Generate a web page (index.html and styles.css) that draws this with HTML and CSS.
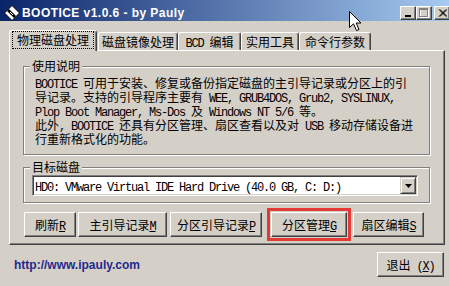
FILE: index.html
```html
<!DOCTYPE html>
<html lang="zh-CN">
<head>
  <meta charset="UTF-8">
  <meta name="viewport" content="width=device-width, initial-scale=1.0">
  <title>BOOTICE v1.0.6 - by Pauly</title>
  <link rel="stylesheet" href="styles.css">
</head>
<body>

<div class="window">
  <div class="titlebar">
    <svg class="app-icon" width="16" height="16" viewBox="0 0 16 16">
      <polygon points="8,0.5 15.5,8 8,15.5 0.5,8" fill="#fff" stroke="#000"/>
      <polygon points="5,4 12,11 10,13 3,6" fill="#000"/>
      <line x1="6" y1="7" x2="9" y2="10" stroke="#fff"/>
      <line x1="7.5" y1="5.5" x2="10.5" y2="8.5" stroke="#fff"/>
    </svg>
    <span class="title">BOOTICE v1.0.6 - by Pauly</span>
    <div class="caption-buttons">
      <button class="cap-btn">
        <svg width="8" height="7" viewBox="0 0 8 7"><rect x="1" y="5" width="6" height="2" fill="#000"/></svg>
      </button>
      <button class="cap-btn">
        <svg width="10" height="10" viewBox="0 0 10 10">
          <rect x="1.5" y="1.5" width="8" height="8" fill="none" stroke="#fff"/>
          <rect x="0.5" y="0.5" width="8" height="8" fill="none" stroke="#808080"/>
          <line x1="0" y1="1.5" x2="9" y2="1.5" stroke="#808080"/>
        </svg>
      </button>
      <button class="cap-btn close">
        <svg width="9" height="8" viewBox="0 0 9 8">
          <path d="M1 0.5 L8 7.5 M8 0.5 L1 7.5 M2 0.5 L9 7.5 M9 0.5 L2 7.5" stroke="#000" stroke-width="1"/>
        </svg>
      </button>
    </div>
  </div>

  <div class="tabs">
    <div class="tab tab-disk active"><span class="focus">物理磁盘处理</span></div>
    <div class="tab tab-image">磁盘镜像处理</div>
    <div class="tab tab-bcd"><span class="en">BCD </span>编辑</div>
    <div class="tab tab-tools">实用工具</div>
    <div class="tab tab-cmd">命令行参数</div>
  </div>

  <div class="panel">
    <fieldset class="group usage">
      <legend>使用说明</legend>
      <p class="desc">
        <span class="en">BOOTICE </span>可用于安装、修复或备份指定磁盘的主引导记录或分区上的引<br>
        导记录。支持的引导程序主要有<span class="en"> WEE, GRUB4DOS, Grub2, SYSLINUX,</span><br>
        <span class="en">Plop Boot Manager, Ms-Dos </span>及<span class="en"> Windows NT 5/6 </span>等。<br>
        此外<span class="en">, BOOTICE </span>还具有分区管理、扇区查看以及对<span class="en"> USB </span>移动存储设备进<br>
        行重新格式化的功能。
      </p>
    </fieldset>

    <fieldset class="group disk">
      <legend>目标磁盘</legend>
      <div class="combo">
        <div class="combo-text"><span class="en">HD0: VMware Virtual IDE Hard Drive (40.0 GB, C: D:)</span></div>
        <span class="combo-arrow">
          <svg width="7" height="4" viewBox="0 0 7 4"><polygon points="0,0 7,0 3.5,4" fill="#000"/></svg>
        </span>
      </div>
    </fieldset>

    <div class="actions">
      <button class="btn btn-refresh">刷新<u class="en">R</u></button>
      <button class="btn btn-mbr">主引导记录<u class="en">M</u></button>
      <button class="btn btn-pbr">分区引导记录<u class="en">P</u></button>
      <button class="btn btn-part">分区管理<u class="en">G</u></button>
      <button class="btn btn-sector">扇区编辑<u class="en">S</u></button>
    </div>
  </div>

  <div class="footer">
    <a class="site" href="#">http://www.ipauly.com</a>
    <button class="btn btn-exit">退出<span class="en"> (<u>X</u>)</span></button>
  </div>

  <svg class="cursor" width="13" height="21" viewBox="0 0 13 21">
    <path d="M0.5 0.5 L0.5 16.5 L4.5 12.8 L7.5 19.5 L10 18.5 L7.2 12 L12 12 Z" fill="#fff" stroke="#000" stroke-linejoin="miter"/>
  </svg>
</div>

</body>
</html>
```

FILE: styles.css
```css
body {
  margin: 0;
  background-color: #d4d0c8;
  font-family: "Noto Sans CJK SC", sans-serif;
  font-size: 12px;
  color: #000;
}
.window {
  position: relative;
  width: 449px;
  height: 286px;
  overflow: hidden;
  background-color: #d4d0c8;
}
/* SimSun latin is 6px wide: squeeze a 12px mono */
.en {
  font-family: "Liberation Mono", monospace;
  font-size: 12px;
  letter-spacing: -1.2px;
}

/* title bar */
.titlebar {
  height: 21px;
  box-sizing: border-box;
  padding: 5px 0 0 4px;
  display: flex;
  align-items: center;
  background: linear-gradient(to right, #0a246a, #a6caf0);
}
.app-icon {
  flex: none;
  margin-right: 2px;
}
.title {
  flex: 1;
  font-family: "Liberation Sans", Arial, sans-serif;
  font-weight: bold;
  font-size: 12px;
  letter-spacing: 0.45px;
  color: #fff;
}
.caption-buttons {
  display: flex;
  margin-right: -1px;
}
.cap-btn {
  width: 16px;
  height: 14px;
  padding: 0;
  display: flex;
  align-items: center;
  justify-content: center;
  background-color: #d4d0c8;
  border: 1px solid;
  border-color: #fff #404040 #404040 #fff;
  box-shadow: inset -1px -1px #808080;
}
.cap-btn.close {
  margin-left: 2px;
}

/* tabs */
.tabs {
  height: 20px;
  margin-top: 9px;
  padding-left: 9px;
  display: flex;
  align-items: flex-end;
}
.tab {
  height: 18px;
  box-sizing: border-box;
  border: 1px solid;
  border-bottom: none;
  border-color: #fff #404040 #fff #fff;
  border-radius: 3px 3px 0 0;
  box-shadow: inset -1px 0 #808080;
  text-align: center;
  line-height: 17px;
  white-space: nowrap;
}
.tab.active {
  height: 21px;
  margin-bottom: -1px;
  position: relative;
  z-index: 1;
  background-color: #d4d0c8;
  line-height: 18px;
}
.focus {
  display: inline-block;
  outline: 1px dotted #000;
  line-height: 16px;
  padding: 0 4px;
}
.tab-disk { width: 88px; }
.tab-image { width: 80px; margin-left: 1px; }
.tab-bcd { width: 63px; }
.tab-tools { width: 58px; }
.tab-cmd { width: 72px; }

/* tab panel */
.panel {
  width: 436px;
  height: 195px;
  margin-left: 9px;
  box-sizing: border-box;
  padding: 8px 14px 0 13px;
  border: 1px solid;
  border-color: #fff #404040 #404040 #fff;
  box-shadow: inset -1px -1px #808080;
}
.group {
  margin: 0;
  min-width: 0;
  border: 1px solid #808080;
  box-shadow: inset 1px 1px #fff, 1px 1px #fff;
}
.group legend {
  padding: 0 2px;
  line-height: 14px;
  background-color: #d4d0c8;
}
.usage {
  padding: 4px 6px 9px 6px;
}
.desc {
  margin: 0;
  padding-left: 5px;
  line-height: 12px;
  white-space: nowrap;
}
.disk {
  margin-top: 5px;
  padding: 1px 11px 6px 8px;
}
.disk legend {
  margin-left: -2px;
}

/* combo box */
.combo {
  height: 21px;
  box-sizing: border-box;
  display: flex;
  align-items: center;
  background-color: #fff;
  border: 1px solid;
  border-color: #808080 #fff #fff #808080;
  box-shadow: inset 1px 1px #404040, inset -1px -1px #d4d0c8;
}
.combo-text {
  flex: 1;
  padding-left: 2px;
  white-space: nowrap;
}
.combo-arrow {
  width: 16px;
  height: 17px;
  margin-right: 1px;
  box-sizing: border-box;
  display: flex;
  align-items: center;
  justify-content: center;
  background-color: #d4d0c8;
  border: 1px solid;
  border-color: #d4d0c8 #404040 #404040 #d4d0c8;
  box-shadow: inset 1px 1px #fff, inset -1px -1px #808080;
}

/* buttons */
.btn {
  height: 25px;
  padding: 0;
  font-family: "Noto Sans CJK SC", sans-serif;
  font-size: 12px;
  color: #000;
  background-color: #d4d0c8;
  border: 1px solid;
  border-color: #fff #404040 #404040 #fff;
  box-shadow: inset -1px -1px #808080;
  white-space: nowrap;
}
.btn u {
  text-underline-offset: 1px;
}
.actions {
  display: flex;
  margin-top: 9px;
}
.btn-refresh { width: 52px; margin-left: 1px; }
.btn-mbr { width: 89px; margin-left: 2px; }
.btn-pbr { width: 92px; margin-left: 3px; }
.btn-part {
  width: 76px;
  margin-left: 9px;
  outline: 3px solid #e53935;
  outline-offset: 1px;
}
.btn-sector { width: 71px; margin-left: 6px; }

/* footer */
.footer {
  display: flex;
  align-items: center;
  justify-content: space-between;
  margin-top: 7px;
  padding: 0 5px 0 14px;
}
.site {
  font-family: "Liberation Sans", Arial, sans-serif;
  font-weight: bold;
  font-size: 12px;
  color: #1f2a8c;
  text-decoration: none;
}
.btn-exit {
  width: 67px;
}

.cursor {
  position: absolute;
  left: 349px;
  top: 11px;
}
```
